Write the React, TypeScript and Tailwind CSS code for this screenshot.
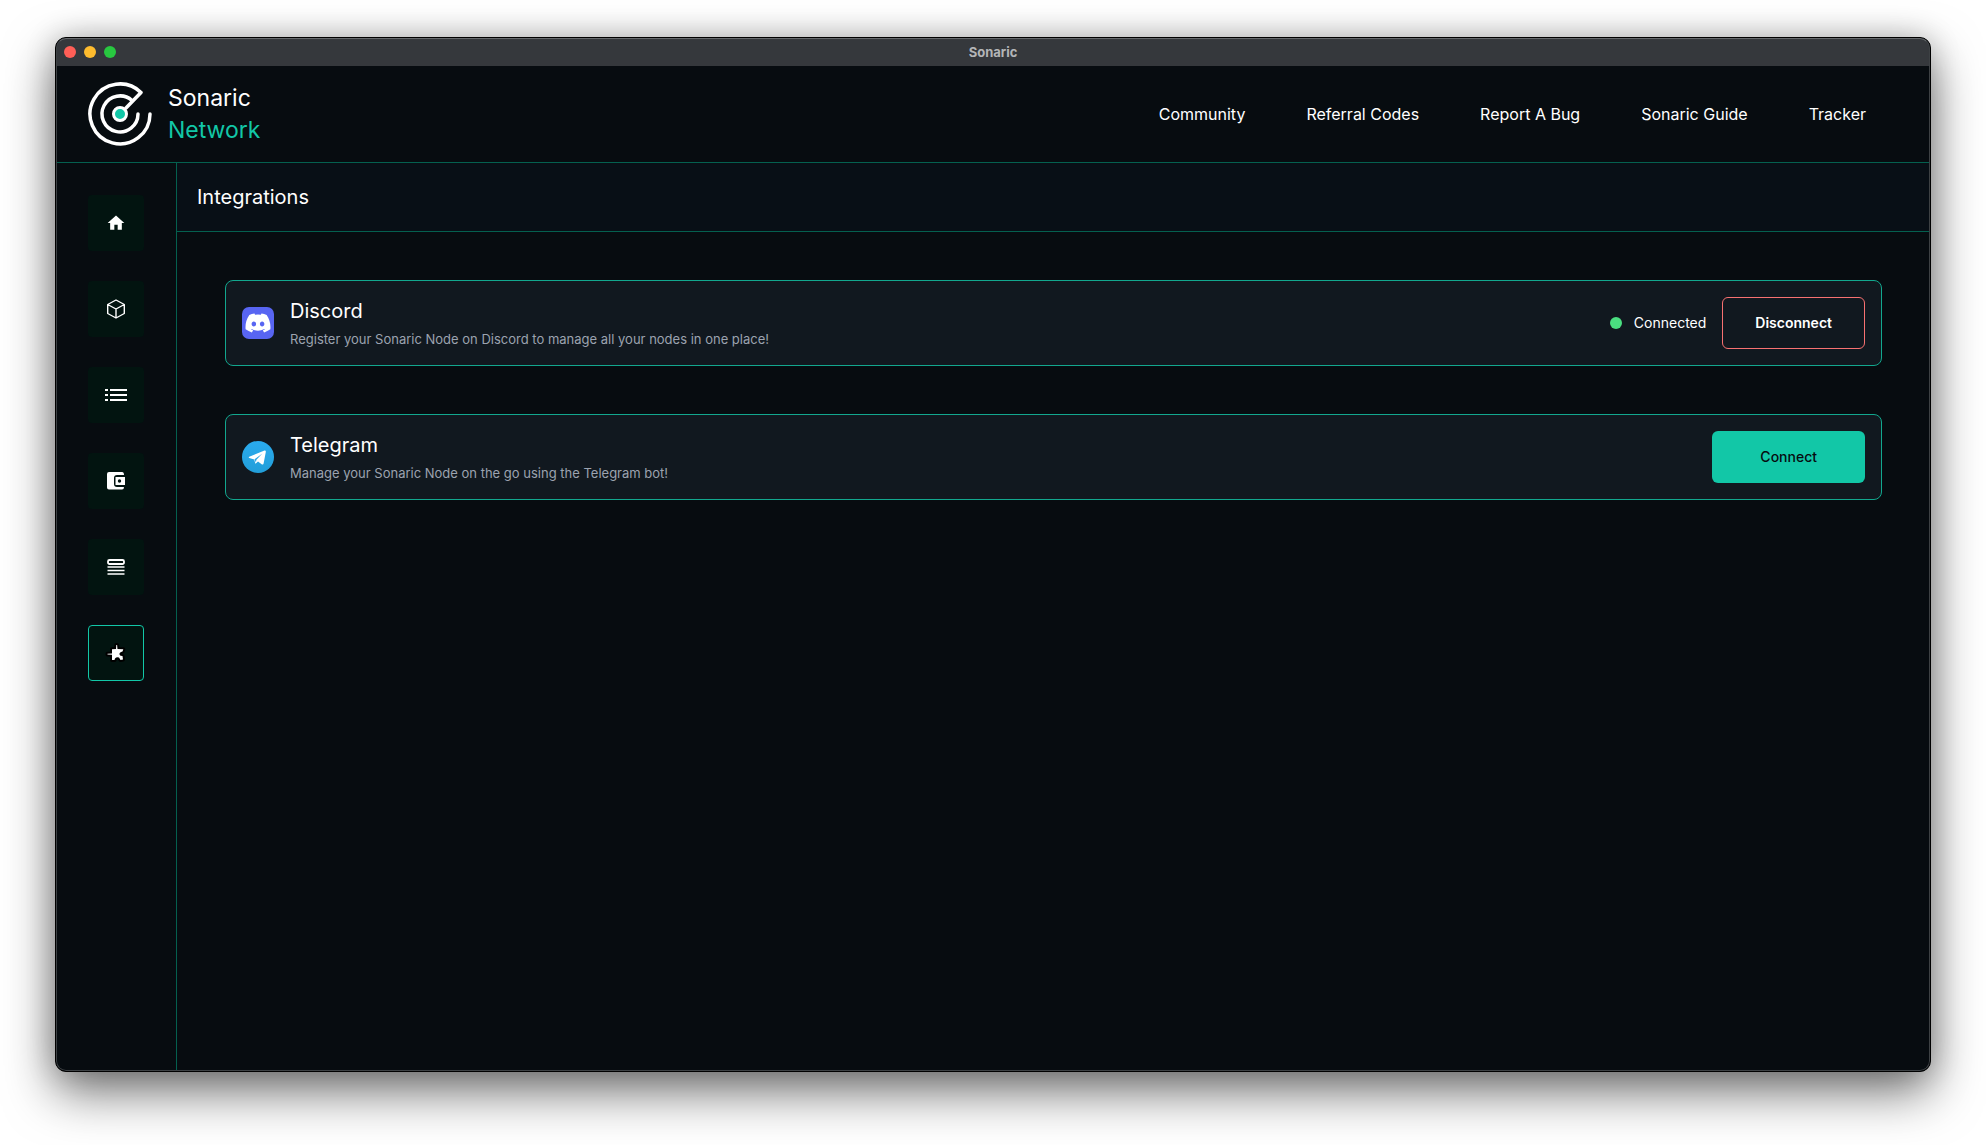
import type { ReactNode } from 'react';
import { MdHome } from 'react-icons/md';
import clsx from 'clsx';

const LINKS = [
  'Community',
  'Referral Codes',
  'Report A Bug',
  'Sonaric Guide',
  'Tracker',
];

const Logo = () => (
  <svg width="64" height="64" viewBox="0 0 64 64" fill="none">
    <g stroke="#fff" strokeWidth="3.5" strokeLinecap="round" strokeLinejoin="round">
      <path d="M62 32A30 30 0 1 1 53 10.500L38 26" />
      <path d="M50 32A18 18 0 1 1 44 18.500" />
    </g>
    <circle cx="32" cy="32" r="6.500" fill="#12c7a7" stroke="#fff" strokeWidth="3" />
  </svg>
);

const CubeIcon = () => (
  <svg width="20" height="20" viewBox="0 0 20 20" fill="none" stroke="currentColor" strokeWidth="1.4" strokeLinejoin="round">
    <path d="M10 1L18.300 5.500V14.500L10 19L1.700 14.500V5.500ZM1.700 5.500L10 10L18.300 5.500M10 10V19" />
  </svg>
);

const ListIcon = () => (
  <svg width="22" height="12" viewBox="0 0 22 12" fill="currentColor">
    <path d="M0 0h3v2H0zM5 0h17v2H5zM0 5h3v2H0zM5 5h17v2H5zM0 10h3v2H0zM5 10h17v2H5z" />
  </svg>
);

const WalletIcon = () => (
  <svg width="20" height="20" viewBox="0 0 20 20" fill="currentColor">
    <path d="M3 1H16Q18 1 18 4H11Q8 4 8 7V13Q8 16 11 16H18Q18 18.500 16 18.500H3Q1 18.500 1 16.500V3Q1 1 3 1Z" />
    <path fillRule="evenodd" d="M9.500 6H19V14H9.500ZM13.500 8.300a1.700 1.700 0 1 0 0 3.400a1.700 1.700 0 1 0 0-3.400Z" />
  </svg>
);

const RowsIcon = () => (
  <svg width="18" height="18" viewBox="0 0 18 18" fill="none" stroke="currentColor">
    <rect x="1" y="2" width="16" height="4" rx="1.5" strokeWidth="1.800" />
    <path d="M.5 9H17.500M.5 12.500H17.500M.5 16H17.500" strokeWidth="1.400" />
  </svg>
);

const PluginIcon = () => (
  <svg width="20" height="20" viewBox="0 0 20 20" className="overflow-visible">
    <path
      d="M10.300 2H11.100L11.500 6L17.300 6.300L16.500 8.500Q13 9.500 13.500 11.500Q14 13 16.500 13L17 16.500L14.500 17L13 14.500Q10.500 13.500 9 15.500L8.500 17H6V11.800L1.500 11.500V10.800L6 10.500V6.300L10 6Z"
      fill="#fff"
      stroke="#000"
      strokeWidth="4"
      paintOrder="stroke"
      strokeLinejoin="round"
    />
  </svg>
);

const NAV = [
  { label: 'Home', icon: <MdHome size={20} /> },
  { label: 'Nodes', icon: <CubeIcon /> },
  { label: 'Activity', icon: <ListIcon /> },
  { label: 'Wallet', icon: <WalletIcon /> },
  { label: 'Logs', icon: <RowsIcon /> },
  { label: 'Integrations', icon: <PluginIcon />, active: true },
];

const DiscordIcon = () => (
  <svg width="32" height="32" viewBox="0 0 32 32">
    <rect width="32" height="32" rx="7" fill="#5865f2" />
    <path
      transform="translate(3.500 3.500) scale(1.040)"
      fill="#fff"
      d="M20.317 4.370a19.791 19.791 0 0 0-4.885-1.515.074.074 0 0 0-.079.037c-.211.375-.445.865-.608 1.250a18.270 18.270 0 0 0-5.487 0 12.640 12.640 0 0 0-.617-1.250.077.077 0 0 0-.079-.037A19.736 19.736 0 0 0 3.677 4.370C.533 9.046-.32 13.580.099 18.058a19.900 19.900 0 0 0 6.065 3.026c.462-.63.874-1.295 1.226-1.994a13.100 13.100 0 0 1-1.945-.919l.372-.292a14.200 14.200 0 0 0 12.366 0l.373.292a12.300 12.300 0 0 1-1.946.918c.36.698.772 1.362 1.225 1.993a19.800 19.800 0 0 0 6.066-3.024c.5-5.177-.838-9.674-3.584-13.688ZM8.020 15.330c-1.183 0-2.157-1.085-2.157-2.419 0-1.333.955-2.419 2.157-2.419 1.210 0 2.176 1.096 2.157 2.420 0 1.333-.956 2.418-2.157 2.418Zm7.975 0c-1.183 0-2.157-1.085-2.157-2.419 0-1.333.955-2.419 2.157-2.419 1.210 0 2.176 1.096 2.157 2.420 0 1.333-.946 2.418-2.157 2.418Z"
    />
  </svg>
);

const TelegramIcon = () => (
  <svg width="32" height="32" viewBox="0 0 32 32">
    <defs>
      <linearGradient id="telegram" x1="0" y1="0" x2="0" y2="1">
        <stop stopColor="#2aabee" />
        <stop offset="1" stopColor="#229ed9" />
      </linearGradient>
    </defs>
    <circle cx="16" cy="16" r="16" fill="url(#telegram)" />
    <path
      fill="#fff"
      d="M7.200 15.800L22.500 9.600C23.400 9.300 24 9.800 23.800 10.900L21.600 22.600C21.400 23.600 20.800 23.800 20 23.400L16 20.400L14 22.300C13.600 22.700 13.300 22.800 13.200 22.200L12.300 18.500L7.300 16.900C6.500 16.600 6.500 16.100 7.200 15.800Z"
    />
    <path fill="#2aa5e3" d="M12.600 18.300L20.400 12.500L14.400 18.700L13.900 21.500Z" />
  </svg>
);

interface IntegrationProps {
  icon: ReactNode;
  name: string;
  description: string;
  children: ReactNode;
}

const Integration = ({ icon, name, description, children }: IntegrationProps) => (
  <section className="flex items-center gap-4 rounded-lg border border-[#12a78e] bg-[#11181f] p-4">
    {icon}
    <div className="grow">
      <h2 className="text-xl leading-7">{name}</h2>
      <p className="mt-1 text-[13px] leading-5 text-[#9ca3af]">{description}</p>
    </div>
    {children}
  </section>
);

const App = () => (
  <div className="flex h-screen flex-col bg-white px-[55px] pt-[37px] pb-[73px] font-[Inter,sans-serif] text-white">
    <div className="relative flex grow flex-col overflow-hidden rounded-[11px] border border-black bg-[#070c10] shadow-[0_20px_50px_rgba(0,0,0,0.55),0_0_30px_rgba(0,0,0,0.2)]">
      {/* inner edge highlight, drawn over the content */}
      <div className="pointer-events-none absolute inset-0 rounded-[10px] border border-[#3d4144] border-t-[#66696c]" />

      <div className="grid h-7 shrink-0 grid-cols-[1fr_auto_1fr] items-center bg-[#35383c] px-2">
        <div className="flex gap-2">
          <span className="size-3 rounded-full bg-[#ff5f57]" />
          <span className="size-3 rounded-full bg-[#febc2e]" />
          <span className="size-3 rounded-full bg-[#28c840]" />
        </div>
        <span className="text-[13px] leading-5 font-bold text-[#b3b5b7]">Sonaric</span>
      </div>

      <header className="flex items-center justify-between border-b border-[#04604f] px-8 py-4">
        <a href="#" className="flex items-center gap-4 text-[23px] leading-8">
          <Logo />
          <span>
            Sonaric
            <br />
            <span className="text-[#12c7a7]">Network</span>
          </span>
        </a>
        <nav className="flex gap-[61px] pr-8">
          {LINKS.map((link) => (
            <a key={link} href="#" className="text-base">
              {link}
            </a>
          ))}
        </nav>
      </header>

      <div className="flex grow">
        <aside className="flex flex-col gap-[30px] border-r border-[#04604f] px-8 py-8">
          {NAV.map(({ label, icon, active }) => (
            <button
              key={label}
              type="button"
              aria-label={label}
              className={clsx(
                'flex size-14 items-center justify-center rounded bg-[#021410]',
                active && 'border border-[#12c7a7]',
              )}
            >
              {icon}
            </button>
          ))}
        </aside>

        <main className="grow">
          <h1 className="border-b border-[#04604f] bg-[#080f16] p-5 text-xl leading-7">
            Integrations
          </h1>
          <div className="flex flex-col gap-12 p-12">
            <Integration
              icon={<DiscordIcon />}
              name="Discord"
              description="Register your Sonaric Node on Discord to manage all your nodes in one place!"
            >
              <div className="flex items-center gap-3 text-sm">
                <span className="size-3 rounded-full bg-[#4ade80]" />
                Connected
              </div>
              <button
                type="button"
                className="h-[52px] rounded-md border border-[#f87171] px-8 text-sm font-semibold"
              >
                Disconnect
              </button>
            </Integration>
            <Integration
              icon={<TelegramIcon />}
              name="Telegram"
              description="Manage your Sonaric Node on the go using the Telegram bot!"
            >
              <button
                type="button"
                className="h-[52px] rounded-md bg-[#12c7a7] px-12 text-sm font-medium text-[#070c10]"
              >
                Connect
              </button>
            </Integration>
          </div>
        </main>
      </div>
    </div>
  </div>
);

export default App;
